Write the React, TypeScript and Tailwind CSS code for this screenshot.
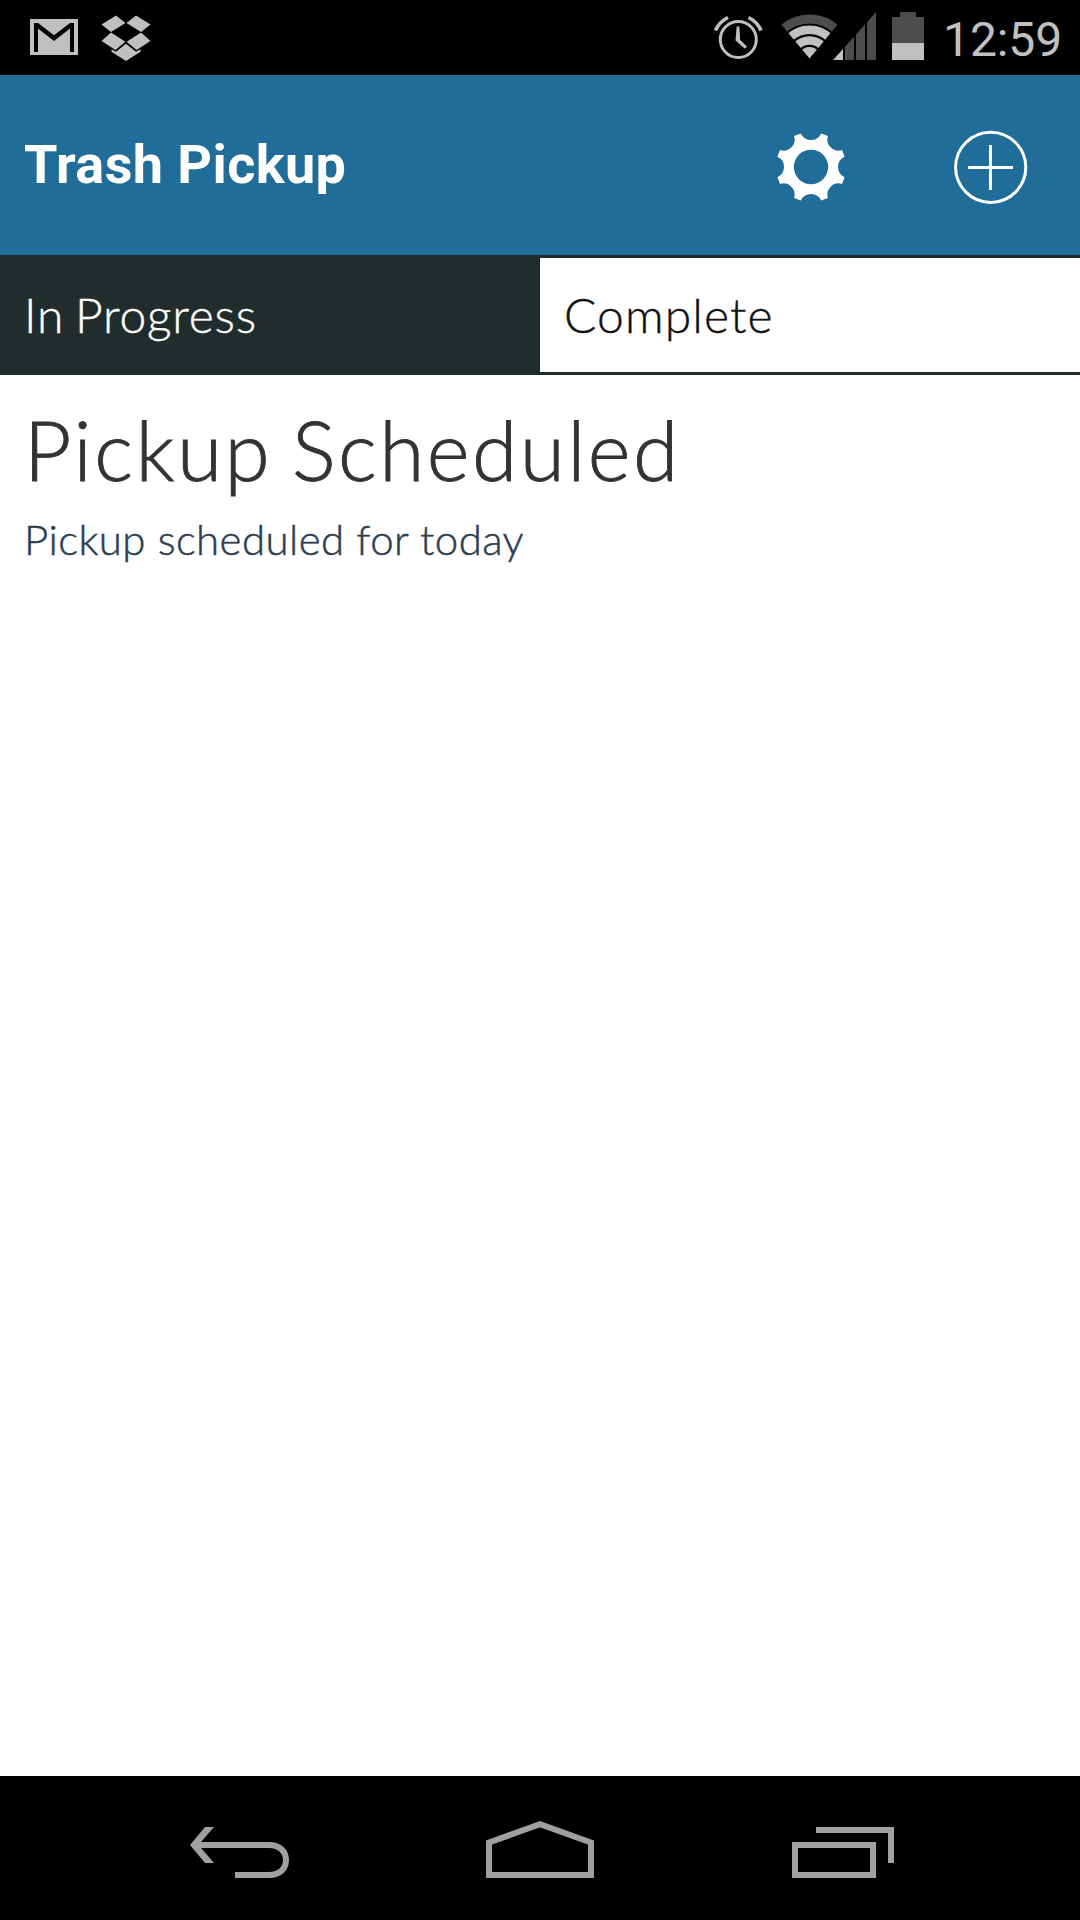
function GmailIcon() {
  return (
    <svg width="48" height="36" viewBox="0 0 48 36">
      <path fill="#c0c0c0" d="M0 0H48V36H0Z" />
      <path fill="#000" d="M4 4H8L24 16.3L40 4H44V33H40V9.5L24 22L8 9.5V33H4Z" />
    </svg>
  );
}

function DropboxIcon() {
  return (
    <svg width="50" height="46" viewBox="0 0 50 46" fill="#c0c0c0">
      <path d="M15 .5L24.5 8L10 17L.5 9.500Z" />
      <path d="M35 .5L25.500 8L40 17L49.500 9.500Z" />
      <path d="M10 17.500L24.300 26.800L14.500 35L.5 26Z" />
      <path d="M40 17.500L25.700 26.800L35.500 35L49.500 26Z" />
      <path d="M25 28.800L35 36.800L39.500 34.300V36.700L25 46L10.500 36.700V34.300L15 36.800Z" />
    </svg>
  );
}

function AlarmIcon() {
  return (
    <svg width="50" height="48" viewBox="0 0 50 48" fill="none" stroke="#c0c0c0">
      <circle cx="25.300" cy="27.500" r="18" strokeWidth="3" />
      <path d="M2.500 18.500Q6 10 15 5.500M35.500 5.500Q44.500 10 48 18.500" strokeWidth="3.600" />
      <path d="M23.700 14.500H26.300L27.200 28L34 34.500L32 36.800L22.500 28.500Z" fill="#c0c0c0" stroke="none" />
    </svg>
  );
}

function WifiIcon() {
  return (
    <svg width="60" height="46" viewBox="0 0 60 46">
      <defs>
        <clipPath id="wifi-cone">
          <path d="M29.500 45.500L-2.500 7V-2H61.500V7Z" />
        </clipPath>
      </defs>
      <g clipPath="url(#wifi-cone)" fill="none">
        <circle cx="29.500" cy="45.500" r="39.500" stroke="#4d4d4d" strokeWidth="9" />
        <circle cx="29.500" cy="45.500" r="28.700" stroke="#c0c0c0" strokeWidth="8.400" />
        <circle cx="29.500" cy="45.500" r="18" stroke="#c0c0c0" strokeWidth="8.600" />
        <circle cx="29.500" cy="45.500" r="11.500" fill="#c0c0c0" />
      </g>
    </svg>
  );
}

function SignalIcon() {
  return (
    <svg width="43" height="48" viewBox="0 0 43 48" fill="#4d4d4d">
      <path d="M0 48L10 37V48Z" fill="#c0c0c0" />
      <path d="M12 48V34.800L21 24.800V48Z" />
      <path d="M23 48V22.600L32 12.600V48Z" />
      <path d="M34 48V10.200L43 0V48Z" />
    </svg>
  );
}

function BatteryIcon() {
  return (
    <svg width="32" height="48" viewBox="0 0 32 48">
      <path d="M8 0H24V5H32V31H0V5H8Z" fill="#4d4d4d" />
      <path d="M0 31H32V48H0Z" fill="#c0c0c0" />
    </svg>
  );
}

function GearIcon() {
  return (
    <svg width="72" height="72" viewBox="-36 -36 72 72">
      <path
        fill="#fff"
        fillRule="evenodd"
        d="M-10.200 -33.600A11.200 11.200 0 0 0 10.200 -33.600L16.900 -31A11.200 11.200 0 0 0 31 -16.900L33.600 -10.200A11.200 11.200 0 0 0 33.600 10.200L31 16.900A11.200 11.200 0 0 0 16.900 31L10.200 33.600A11.200 11.200 0 0 0 -10.200 33.600L-16.900 31A11.200 11.200 0 0 0 -31 16.900L-33.600 10.200A11.200 11.200 0 0 0 -33.600 -10.200L-31 -16.900A11.200 11.200 0 0 0 -16.900 -31ZM17.200 0A17.200 17.200 0 1 0 -17.200 0A17.200 17.200 0 1 0 17.200 0Z"
      />
    </svg>
  );
}

function AddIcon() {
  return (
    <svg width="74" height="74" viewBox="0 0 74 74" fill="none" stroke="#fff" strokeWidth="3">
      <circle cx="36.700" cy="37.300" r="35.100" />
      <path d="M36.500 15V60M14 37.500H59" />
    </svg>
  );
}

export default function App() {
  return (
    <div className="flex h-[1920px] w-[1080px] flex-col overflow-hidden bg-white">
      <div className="flex h-[75px] shrink-0 items-start bg-black pl-[30px]">
        <div className="pt-[19px]"><GmailIcon /></div>
        <div className="ml-[23px] pt-[15px]"><DropboxIcon /></div>
        <div className="ml-[562px] pt-3"><AlarmIcon /></div>
        <div className="ml-[17px] pt-[13px]"><WifiIcon /></div>
        <div className="-ml-[7px] pt-3"><SignalIcon /></div>
        <div className="ml-4 pt-3"><BatteryIcon /></div>
        <div className="ml-[19px] pt-3 font-['Roboto',sans-serif] text-[48px] leading-[56px] tracking-[-0.1px] text-[#c0c0c0]">12:59</div>
      </div>

      <header className="flex h-[180px] shrink-0 items-start bg-[#216d99] text-white">
        <h1 className="w-[775px] pt-[58px] pl-6 font-['Roboto',sans-serif] text-[54px] leading-[64px] font-bold tracking-[0.4px]">Trash Pickup</h1>
        <button className="mt-14" aria-label="Settings"><GearIcon /></button>
        <button className="mt-[55px] ml-[107px]" aria-label="Add"><AddIcon /></button>
      </header>

      <div className="grid h-[120px] shrink-0 grid-cols-2 border-y-3 border-[#212d2d] font-['Lato',sans-serif] text-[48px] leading-[58px] font-light">
        <div className="bg-[#212d2d] pt-[28px] pl-6 tracking-[0.8px] text-white [-webkit-text-stroke:0.4px] [word-spacing:-3px]">In Progress</div>
        <div className="bg-white pt-[28px] pl-6 tracking-[1.1px] text-[#111] [-webkit-text-stroke:0.4px]">Complete</div>
      </div>

      <main className="grow pl-6 font-['Lato',sans-serif] font-light">
        <h2 className="pt-6 text-[82px] leading-[100px] tracking-[2.5px] text-[#333] [-webkit-text-stroke:0.9px] [word-spacing:-5px]">Pickup Scheduled</h2>
        <p className="pt-[15px] text-[42px] leading-[50px] tracking-[0.4px] text-[#2c3e50] [-webkit-text-stroke:0.5px]">Pickup scheduled for today</p>
      </main>

      <nav className="flex h-[144px] shrink-0 items-start bg-black pl-[190px]">
        <svg className="mt-[51px]" width="99" height="51" viewBox="0 0 99 51" fill="#a0a0a0">
          <path d="M15 0H24L11 15H79C91 15 99 22 99 33S91 51 79 51H45V45H79C88 45 93 40 93 33S88 21 79 21H11L24 36H15L0 18Z" />
        </svg>
        <svg className="mt-[45px] ml-[197px]" width="108" height="57" viewBox="0 0 108 57" fill="none" stroke="#a0a0a0" strokeWidth="6">
          <path d="M3 21.500L54 3.200L105 21.500V54H3Z" />
        </svg>
        <svg className="mt-[51px] ml-[198px]" width="102" height="51" viewBox="0 0 102 51" fill="none" stroke="#a0a0a0" strokeWidth="6">
          <path d="M3 18H81V48H3ZM24 3H99V36" />
        </svg>
      </nav>
    </div>
  );
}
